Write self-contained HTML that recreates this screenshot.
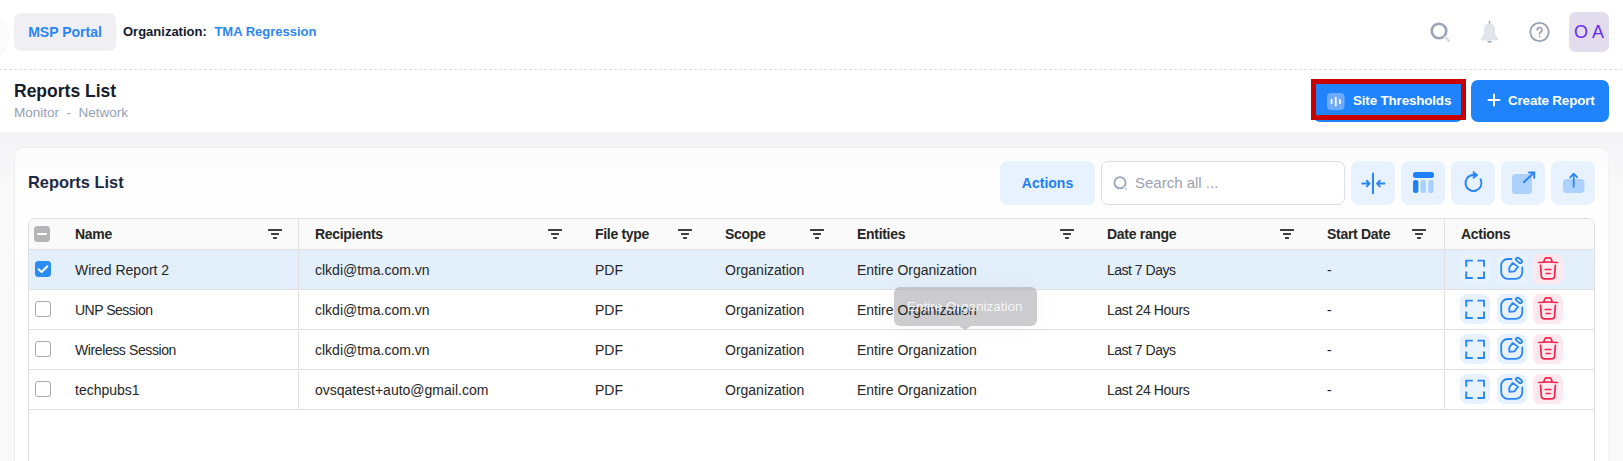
<!DOCTYPE html>
<html><head><meta charset="utf-8">
<style>
*{box-sizing:border-box;margin:0;padding:0}
html,body{width:1623px;height:461px;overflow:hidden;background:#fff;font-family:"Liberation Sans",sans-serif}
.abs{position:absolute}
#top{position:absolute;left:0;top:0;width:1623px;height:70px;background:#fff}
#dash{position:absolute;left:0;top:69px;width:1623px;height:1px;background:repeating-linear-gradient(90deg,#dcdfe9 0 2px,transparent 2px 4px,#dcdfe9 4px 5px)}
.msp{left:14px;top:13px;width:102px;height:38px;border-radius:7px;background:#f0f0f4;color:#2b86f6;font-weight:bold;font-size:14px;line-height:38px;text-align:center}
.org{left:123px;top:23px;font-size:13px;font-weight:bold;color:#101a30;line-height:18px;white-space:nowrap}
.org span{color:#2b86f6;margin-left:4px}
.avatar{left:1569px;top:12px;width:40px;height:40px;border-radius:7px;background:#e3dcec;color:#6a2ef0;font-size:18px;line-height:40px;text-align:center;white-space:nowrap}
#ph{position:absolute;left:0;top:70px;width:1623px;height:62px;background:#fff}
.ptitle{left:14px;top:80px;font-size:17.5px;font-weight:bold;color:#161c2b;line-height:22px;white-space:nowrap}
.bc{left:14px;top:105px;font-size:13.5px;color:#98a0b3;line-height:16px;white-space:pre}
.btn{height:42px;top:80px;border-radius:7px;background:#1f84fb;color:#fff;font-weight:bold;font-size:14px;line-height:42px;white-space:nowrap}
#bg{position:absolute;left:0;top:132px;width:1623px;height:329px;background:linear-gradient(#f3f3f5 0,#f6f6f8 20px,#f9f9f9 60px)}
#card{position:absolute;left:14px;top:147px;width:1595px;height:330px;background:linear-gradient(#fcfcfc 0,#fefefe 60px,#fff 120px);border:1px solid #ededf0;border-right-color:#f3f3f5;border-radius:9px}
.ctitle{left:28px;top:172px;font-size:16.4px;font-weight:bold;color:#1e2944;line-height:20px;white-space:nowrap}
.actbtn{left:1000px;top:161px;width:95px;height:44px;border-radius:7px;background:#e8f2fe;color:#1f7ef5;font-weight:bold;font-size:14px;line-height:44px;text-align:center}
.search{left:1101px;top:161px;width:244px;height:44px;border-radius:7px;background:#fff;border:1px solid #d9dde6}
.search .ph{position:absolute;left:33px;top:0;line-height:42px;font-size:15px;color:#9ba2b3}
.ib{top:161px;width:44px;height:44px;border-radius:8px;background:#e8f2fe}
.ib svg{position:absolute;left:0;top:0}

#tbl{position:absolute;left:28px;top:218px;width:1567px;height:300px;border:1px solid #e0e0e0;border-radius:7px;background:#fff}
#thead{position:absolute;left:29px;top:219px;width:1565px;height:30px;background:#fafafa;border-radius:6px 6px 0 0;border-bottom:1px solid #e0e0e0;box-sizing:content-box}
.cbh{left:34px;top:226px;width:16px;height:16px;border-radius:3.5px;background:#b5b5b7}
.cbh i{position:absolute;left:3px;top:6.5px;width:10px;height:2.5px;background:#fff;border-radius:1px}
.th{top:219px;line-height:30px;font-size:14px;letter-spacing:-0.3px;font-weight:bold;color:#262626;white-space:nowrap}
.flt{top:229px;fill:#3d3d3d}
.vsep{width:1px;background:#e0e0e0}
.row{left:29px;width:1565px;height:39px}
.hsep{left:29px;width:1565px;height:1px;background:#e0e0e0}
.cb{left:35px;width:16px;height:16px;border:1px solid #aaa;border-radius:3px;background:#fff}
.cb.on{background:#2b8cf2;border-color:#2b8cf2}
.cb svg{position:absolute;left:-1px;top:-1px}
.td{line-height:39px;padding-top:1px;font-size:14px;color:#262626;white-space:nowrap}
.ab{width:30px;height:30px;border-radius:7px;background:#e8f2fe}
.ab.del{background:#fde8ed}
.ab svg{position:absolute;left:0;top:0}
.tip{left:894px;top:287px;width:143px;height:39px;border-radius:6px;background:rgba(170,170,174,0.6);box-shadow:0 0 30px rgba(0,0,0,0.04)}
.tiparrow{left:959px;top:326px;width:0;height:0;border-left:6px solid transparent;border-right:6px solid transparent;border-top:4px solid rgba(170,170,174,0.6)}
.tiptext{left:907px;top:287px;line-height:39px;font-size:13.5px;color:rgba(255,255,255,0.85);white-space:nowrap}
.td,.tiptext{z-index:2}

.redbox{left:1311px;top:79px;width:155px;height:41px;border:5px solid #c80000}
.btntext{top:80px;line-height:42px;font-size:13.4px;letter-spacing:-0.15px;font-weight:bold;color:#fff;white-space:nowrap}
</style></head><body>
<div id="top"></div>
<div id="dash"></div>
<div class="abs" style="left:-36px;top:13px;width:45px;height:47px;border-radius:50%;background:#fcfcfc;border:1px solid #f6f6f7"></div>
<div class="abs msp">MSP Portal</div>
<div class="abs org">Organization: <span>TMA Regression</span></div>
<!-- top icons -->
<svg class="abs" style="left:1420px;top:12px" width="140" height="40" viewBox="0 0 140 40">
  <circle cx="19" cy="19" r="7.3" fill="none" stroke="#9aa3b6" stroke-width="2.6"/>
  <line x1="25" y1="25" x2="28.8" y2="28.8" stroke="#d6dbe4" stroke-width="2.4" stroke-linecap="round"/>
  <path d="M69.5 9.5V12" stroke="#9aa3b6" stroke-width="1.5" stroke-linecap="round"/>
  <path d="M69.5 11.5C66.2 11.5 64 13.8 64 17.2V21C64 22.8 62.5 24.5 61.2 25.8C60.2 26.8 60.8 28.5 62.3 28.5H76.7C78.2 28.5 78.8 26.8 77.8 25.8C76.5 24.5 75 22.8 75 21V17.2C75 13.8 72.8 11.5 69.5 11.5Z" fill="#e1e4ea"/>
  <path d="M67.3 29A2.2 1.8 0 0 0 71.7 29Z" fill="#9aa3b6"/>
  <circle cx="119.5" cy="20" r="9.2" fill="none" stroke="#9aa3b6" stroke-width="1.8"/>
  <path d="M117.2 17.9A2.4 2.4 0 1 1 120.4 20.2C119.8 20.6 119.5 21.1 119.5 22" fill="none" stroke="#9aa3b6" stroke-width="1.7" stroke-linecap="round"/>
  <circle cx="119.5" cy="24.4" r="0.9" fill="#9aa3b6"/>
</svg>
<div class="abs avatar">O A</div>

<div id="ph"></div>
<div class="abs ptitle">Reports List</div>
<div class="abs bc">Monitor  -  Network</div>

<div class="abs btn" style="left:1313px;width:150px"></div>
<div class="abs redbox"></div>
<svg class="abs" style="left:1327px;top:93px" width="18" height="17" viewBox="0 0 18 17"><rect x="0" y="0" width="17.5" height="17" rx="4" fill="#6eaaff"/><path d="M4.6 6.8V10.2M8.75 4.6V12.4M12.9 6.8V10.2" stroke="#fff" stroke-width="1.8" stroke-linecap="round"/></svg>
<div class="abs btntext" style="left:1353px">Site Thresholds</div>
<div class="abs btn" style="left:1471px;width:138px"></div>
<svg class="abs" style="left:1486px;top:92px" width="16" height="16" viewBox="0 0 16 16"><path d="M8 2.5V13.5M2.5 8H13.5" stroke="#fff" stroke-width="1.9" stroke-linecap="round"/></svg>
<div class="abs btntext" style="left:1508px">Create Report</div>

<div id="bg"></div>
<div id="card"></div>
<div class="abs ctitle">Reports List</div>
<div class="abs actbtn">Actions</div>
<div class="abs search"><svg style="position:absolute;left:10px;top:13px" width="18" height="18" viewBox="0 0 18 18"><circle cx="8" cy="7.8" r="5.6" fill="none" stroke="#9aa3b6" stroke-width="1.8"/><path d="M12.2 12L14.3 14.1" stroke="#d6dbe4" stroke-width="1.8" stroke-linecap="round"/></svg><span class="ph">Search all ...</span></div>
<div class="abs ib" style="left:1351px"><svg width="44" height="44" viewBox="0 0 44 44" fill="none" stroke="#2b86f6" stroke-width="2" stroke-linecap="round" stroke-linejoin="round"><path d="M22 12.5V32.2"/><path d="M11.2 22.6H18.5M15.8 19.8L18.5 22.6L15.8 25.4"/><path d="M33.4 22.6H26.1M28.8 19.8L26.1 22.6L28.8 25.4"/></svg></div>
<div class="abs ib" style="left:1401px"><svg width="44" height="44" viewBox="0 0 44 44"><rect x="12" y="11" width="21" height="6" rx="2.5" fill="#1f80f8"/><rect x="12" y="19" width="5.4" height="13" rx="2.2" fill="#1f80f8"/><rect x="19.6" y="19" width="5.4" height="13" rx="2.2" fill="#a9cffd"/><rect x="27.2" y="19" width="5.4" height="13" rx="2.2" fill="#a9cffd"/></svg></div>
<div class="abs ib" style="left:1451px"><svg width="44" height="44" viewBox="0 0 44 44" fill="none" stroke="#2b86f6" stroke-width="2" stroke-linecap="round"><path d="M29.6 18.3A8 8 0 1 1 22 14"/><path d="M22.6 10.6L26.8 14.1L22.6 17.4Z" fill="#2b86f6" stroke-linejoin="round" stroke-width="1"/></svg></div>
<div class="abs ib" style="left:1501px"><svg width="44" height="44" viewBox="0 0 44 44"><rect x="11" y="13" width="20" height="20" rx="3.5" fill="#acd1fd"/><path d="M23 21.2L33 11.5M28 11.5H33.2V16.8" fill="none" stroke="#2b86f6" stroke-width="2" stroke-linecap="round"/></svg></div>
<div class="abs ib" style="left:1551px"><svg width="44" height="44" viewBox="0 0 44 44"><rect x="12" y="18" width="21.5" height="14" rx="4" fill="#acd1fd"/><path d="M22.7 25.8V12.8M19.2 16.3L22.7 12.6L26.2 16.3" fill="none" stroke="#2b86f6" stroke-width="1.8" stroke-linecap="round" stroke-linejoin="round"/></svg></div>
<div id="tbl"></div>
<div id="thead"></div>
<div class="abs cbh"><i></i></div>
<div class="abs th" style="left:75px">Name</div>
<div class="abs th" style="left:315px">Recipients</div>
<div class="abs th" style="left:595px">File type</div>
<div class="abs th" style="left:725px">Scope</div>
<div class="abs th" style="left:857px">Entities</div>
<div class="abs th" style="left:1107px">Date range</div>
<div class="abs th" style="left:1327px">Start Date</div>
<div class="abs th" style="left:1461px">Actions</div>
<svg class="abs flt" style="left:268px" width="14" height="10"><rect x="0" y="0" width="14" height="2" rx="0.5"/><rect x="3" y="4" width="8" height="2" rx="0.5"/><rect x="5" y="8" width="4" height="2" rx="0.5"/></svg>
<svg class="abs flt" style="left:548px" width="14" height="10"><rect x="0" y="0" width="14" height="2" rx="0.5"/><rect x="3" y="4" width="8" height="2" rx="0.5"/><rect x="5" y="8" width="4" height="2" rx="0.5"/></svg>
<svg class="abs flt" style="left:678px" width="14" height="10"><rect x="0" y="0" width="14" height="2" rx="0.5"/><rect x="3" y="4" width="8" height="2" rx="0.5"/><rect x="5" y="8" width="4" height="2" rx="0.5"/></svg>
<svg class="abs flt" style="left:810px" width="14" height="10"><rect x="0" y="0" width="14" height="2" rx="0.5"/><rect x="3" y="4" width="8" height="2" rx="0.5"/><rect x="5" y="8" width="4" height="2" rx="0.5"/></svg>
<svg class="abs flt" style="left:1060px" width="14" height="10"><rect x="0" y="0" width="14" height="2" rx="0.5"/><rect x="3" y="4" width="8" height="2" rx="0.5"/><rect x="5" y="8" width="4" height="2" rx="0.5"/></svg>
<svg class="abs flt" style="left:1280px" width="14" height="10"><rect x="0" y="0" width="14" height="2" rx="0.5"/><rect x="3" y="4" width="8" height="2" rx="0.5"/><rect x="5" y="8" width="4" height="2" rx="0.5"/></svg>
<svg class="abs flt" style="left:1412px" width="14" height="10"><rect x="0" y="0" width="14" height="2" rx="0.5"/><rect x="3" y="4" width="8" height="2" rx="0.5"/><rect x="5" y="8" width="4" height="2" rx="0.5"/></svg>
<div class="abs vsep" style="top:219px;height:30px;left:298px"></div>
<div class="abs vsep" style="top:219px;height:30px;left:1444px"></div>
<div class="abs row" style="top:250px;background:#e3f0fc"></div>
<div class="abs vsep" style="top:251px;height:38px;left:298px"></div>
<div class="abs vsep" style="top:251px;height:38px;left:1444px"></div>
<div class="abs cb on" style="top:261px"><svg width="16" height="16" viewBox="0 0 16 16"><path d="M3.6 8.2 L6.6 11 L12.4 5.2" fill="none" stroke="#fff" stroke-width="2" stroke-linecap="round" stroke-linejoin="round"/></svg></div>
<div class="abs td" style="left:75px;top:250px">Wired Report 2</div>
<div class="abs td" style="left:315px;top:250px">clkdi@tma.com.vn</div>
<div class="abs td" style="left:595px;top:250px">PDF</div>
<div class="abs td" style="left:725px;top:250px">Organization</div>
<div class="abs td" style="left:857px;top:250px">Entire Organization</div>
<div class="abs td" style="left:1107px;top:250px;letter-spacing:-0.5px">Last 7 Days</div>
<div class="abs td" style="left:1327px;top:250px">-</div>
<div class="abs ab" style="left:1460px;top:254px"><svg width="30" height="30" viewBox="0 0 30 30" fill="none" stroke="#2b86f6" stroke-width="1.9"><path d="M6.2 12.8V6.6H12.8M17.4 6.6H24V12.8M24 17.6V24H17.4M12.8 24H6.2V17.6"/></svg></div>
<div class="abs ab" style="left:1497px;top:254px"><svg width="30" height="30" viewBox="0 0 30 30" fill="none" stroke="#2b86f6" stroke-width="1.8" stroke-linecap="round" stroke-linejoin="round"><path d="M14.5 5H10.8A6.6 6.6 0 0 0 4.2 11.6V18.2A6.6 6.6 0 0 0 10.8 24.8H18.7A6.6 6.6 0 0 0 25.3 18.2V13.3"/><path d="M12.4 17.9L12.3 13.3L15.8 8.9L21 12.9L17.3 17.3Z"/><rect x="-3.4" y="-1.7" width="6.8" height="3.4" rx="1.7" transform="translate(22 6.4) rotate(40)"/></svg></div>
<div class="abs ab del" style="left:1533px;top:254px"><svg width="30" height="30" viewBox="0 0 30 30" fill="none" stroke="#f3234d" stroke-width="1.7" stroke-linecap="round" stroke-linejoin="round"><path d="M5.6 8.5Q15 7.5 24.4 8.5"/><path d="M10.9 8.1L11.6 5.4A2 2 0 0 1 13.5 3.9H16.5A2 2 0 0 1 18.4 5.4L19.1 8.1"/><path d="M7.5 11.3L8.4 22.3A2.7 2.7 0 0 0 11.1 24.8H18.9A2.7 2.7 0 0 0 21.6 22.3L22.3 11.3"/><path d="M12.2 15.5H17.8M13.2 19.5H17.1"/></svg></div>
<div class="abs hsep" style="top:289px"></div>
<div class="abs row" style="top:290px;background:#fff"></div>
<div class="abs vsep" style="top:291px;height:38px;left:298px"></div>
<div class="abs vsep" style="top:291px;height:38px;left:1444px"></div>
<div class="abs cb" style="top:301px"></div>
<div class="abs td" style="left:75px;top:290px;letter-spacing:-0.5px">UNP Session</div>
<div class="abs td" style="left:315px;top:290px">clkdi@tma.com.vn</div>
<div class="abs td" style="left:595px;top:290px">PDF</div>
<div class="abs td" style="left:725px;top:290px">Organization</div>
<div class="abs td" style="left:857px;top:290px">Entire Organization</div>
<div class="abs td" style="left:1107px;top:290px;letter-spacing:-0.37px">Last 24 Hours</div>
<div class="abs td" style="left:1327px;top:290px">-</div>
<div class="abs ab" style="left:1460px;top:294px"><svg width="30" height="30" viewBox="0 0 30 30" fill="none" stroke="#2b86f6" stroke-width="1.9"><path d="M6.2 12.8V6.6H12.8M17.4 6.6H24V12.8M24 17.6V24H17.4M12.8 24H6.2V17.6"/></svg></div>
<div class="abs ab" style="left:1497px;top:294px"><svg width="30" height="30" viewBox="0 0 30 30" fill="none" stroke="#2b86f6" stroke-width="1.8" stroke-linecap="round" stroke-linejoin="round"><path d="M14.5 5H10.8A6.6 6.6 0 0 0 4.2 11.6V18.2A6.6 6.6 0 0 0 10.8 24.8H18.7A6.6 6.6 0 0 0 25.3 18.2V13.3"/><path d="M12.4 17.9L12.3 13.3L15.8 8.9L21 12.9L17.3 17.3Z"/><rect x="-3.4" y="-1.7" width="6.8" height="3.4" rx="1.7" transform="translate(22 6.4) rotate(40)"/></svg></div>
<div class="abs ab del" style="left:1533px;top:294px"><svg width="30" height="30" viewBox="0 0 30 30" fill="none" stroke="#f3234d" stroke-width="1.7" stroke-linecap="round" stroke-linejoin="round"><path d="M5.6 8.5Q15 7.5 24.4 8.5"/><path d="M10.9 8.1L11.6 5.4A2 2 0 0 1 13.5 3.9H16.5A2 2 0 0 1 18.4 5.4L19.1 8.1"/><path d="M7.5 11.3L8.4 22.3A2.7 2.7 0 0 0 11.1 24.8H18.9A2.7 2.7 0 0 0 21.6 22.3L22.3 11.3"/><path d="M12.2 15.5H17.8M13.2 19.5H17.1"/></svg></div>
<div class="abs hsep" style="top:329px"></div>
<div class="abs row" style="top:330px;background:#fff"></div>
<div class="abs vsep" style="top:331px;height:38px;left:298px"></div>
<div class="abs vsep" style="top:331px;height:38px;left:1444px"></div>
<div class="abs cb" style="top:341px"></div>
<div class="abs td" style="left:75px;top:330px;letter-spacing:-0.4px">Wireless Session</div>
<div class="abs td" style="left:315px;top:330px">clkdi@tma.com.vn</div>
<div class="abs td" style="left:595px;top:330px">PDF</div>
<div class="abs td" style="left:725px;top:330px">Organization</div>
<div class="abs td" style="left:857px;top:330px">Entire Organization</div>
<div class="abs td" style="left:1107px;top:330px;letter-spacing:-0.5px">Last 7 Days</div>
<div class="abs td" style="left:1327px;top:330px">-</div>
<div class="abs ab" style="left:1460px;top:334px"><svg width="30" height="30" viewBox="0 0 30 30" fill="none" stroke="#2b86f6" stroke-width="1.9"><path d="M6.2 12.8V6.6H12.8M17.4 6.6H24V12.8M24 17.6V24H17.4M12.8 24H6.2V17.6"/></svg></div>
<div class="abs ab" style="left:1497px;top:334px"><svg width="30" height="30" viewBox="0 0 30 30" fill="none" stroke="#2b86f6" stroke-width="1.8" stroke-linecap="round" stroke-linejoin="round"><path d="M14.5 5H10.8A6.6 6.6 0 0 0 4.2 11.6V18.2A6.6 6.6 0 0 0 10.8 24.8H18.7A6.6 6.6 0 0 0 25.3 18.2V13.3"/><path d="M12.4 17.9L12.3 13.3L15.8 8.9L21 12.9L17.3 17.3Z"/><rect x="-3.4" y="-1.7" width="6.8" height="3.4" rx="1.7" transform="translate(22 6.4) rotate(40)"/></svg></div>
<div class="abs ab del" style="left:1533px;top:334px"><svg width="30" height="30" viewBox="0 0 30 30" fill="none" stroke="#f3234d" stroke-width="1.7" stroke-linecap="round" stroke-linejoin="round"><path d="M5.6 8.5Q15 7.5 24.4 8.5"/><path d="M10.9 8.1L11.6 5.4A2 2 0 0 1 13.5 3.9H16.5A2 2 0 0 1 18.4 5.4L19.1 8.1"/><path d="M7.5 11.3L8.4 22.3A2.7 2.7 0 0 0 11.1 24.8H18.9A2.7 2.7 0 0 0 21.6 22.3L22.3 11.3"/><path d="M12.2 15.5H17.8M13.2 19.5H17.1"/></svg></div>
<div class="abs hsep" style="top:369px"></div>
<div class="abs row" style="top:370px;background:#fff"></div>
<div class="abs vsep" style="top:371px;height:38px;left:298px"></div>
<div class="abs vsep" style="top:371px;height:38px;left:1444px"></div>
<div class="abs cb" style="top:381px"></div>
<div class="abs td" style="left:75px;top:370px">techpubs1</div>
<div class="abs td" style="left:315px;top:370px">ovsqatest+auto@gmail.com</div>
<div class="abs td" style="left:595px;top:370px">PDF</div>
<div class="abs td" style="left:725px;top:370px">Organization</div>
<div class="abs td" style="left:857px;top:370px">Entire Organization</div>
<div class="abs td" style="left:1107px;top:370px;letter-spacing:-0.37px">Last 24 Hours</div>
<div class="abs td" style="left:1327px;top:370px">-</div>
<div class="abs ab" style="left:1460px;top:374px"><svg width="30" height="30" viewBox="0 0 30 30" fill="none" stroke="#2b86f6" stroke-width="1.9"><path d="M6.2 12.8V6.6H12.8M17.4 6.6H24V12.8M24 17.6V24H17.4M12.8 24H6.2V17.6"/></svg></div>
<div class="abs ab" style="left:1497px;top:374px"><svg width="30" height="30" viewBox="0 0 30 30" fill="none" stroke="#2b86f6" stroke-width="1.8" stroke-linecap="round" stroke-linejoin="round"><path d="M14.5 5H10.8A6.6 6.6 0 0 0 4.2 11.6V18.2A6.6 6.6 0 0 0 10.8 24.8H18.7A6.6 6.6 0 0 0 25.3 18.2V13.3"/><path d="M12.4 17.9L12.3 13.3L15.8 8.9L21 12.9L17.3 17.3Z"/><rect x="-3.4" y="-1.7" width="6.8" height="3.4" rx="1.7" transform="translate(22 6.4) rotate(40)"/></svg></div>
<div class="abs ab del" style="left:1533px;top:374px"><svg width="30" height="30" viewBox="0 0 30 30" fill="none" stroke="#f3234d" stroke-width="1.7" stroke-linecap="round" stroke-linejoin="round"><path d="M5.6 8.5Q15 7.5 24.4 8.5"/><path d="M10.9 8.1L11.6 5.4A2 2 0 0 1 13.5 3.9H16.5A2 2 0 0 1 18.4 5.4L19.1 8.1"/><path d="M7.5 11.3L8.4 22.3A2.7 2.7 0 0 0 11.1 24.8H18.9A2.7 2.7 0 0 0 21.6 22.3L22.3 11.3"/><path d="M12.2 15.5H17.8M13.2 19.5H17.1"/></svg></div>
<div class="abs hsep" style="top:409px"></div>
<div class="abs tip"></div><div class="abs tiparrow"></div><div class="abs tiptext">Entire Organization</div>
</body></html>
